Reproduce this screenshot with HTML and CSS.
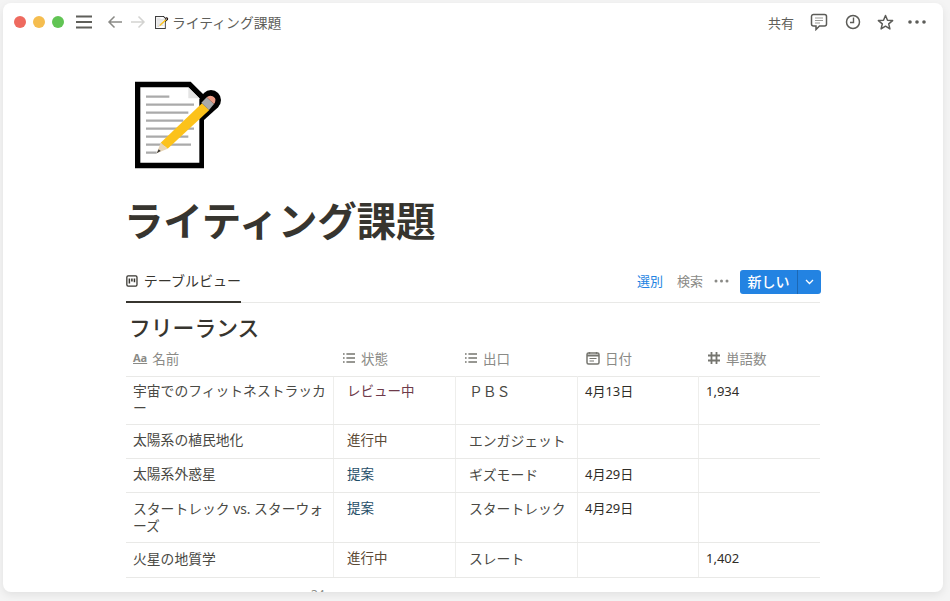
FILE: index.html
```html
<!DOCTYPE html>
<html lang="ja">
<head>
<meta charset="utf-8">
<title>ライティング課題</title>
<link rel="stylesheet" href="styles.css">
</head>
<body>
<svg class="defs" width="0" height="0" aria-hidden="true">
  <symbol id="memo" viewBox="0 0 360 330">
    <path d="M45 35H212L252 75V295H45Z" fill="#000"/>
    <circle cx="273" cy="90" r="30" fill="#000"/>
    <path d="M235 70L296 110L252 150L215 110Z" fill="#000"/>
    <path d="M61 52H205L238 85V278H61Z" fill="#fff"/>
    <path d="M205 52L238 85H205Z" fill="#e4e4e4"/>
    <path d="M78 80H148M78 104H222M78 128H205M78 152H190M78 176H222M78 200H205M78 224H213M78 248H110" stroke="#aaa" stroke-width="7" fill="none"/>
    <path d="M246 100L268 120L143 236L122 218Z" fill="#fcc21b"/>
    <path d="M122 218L143 236L110 250Z" fill="#e8d5b5"/>
    <path d="M116 238L122 243L110 250Z" fill="#333"/>
    <path d="M244 98L260 82L282 102L267 120Z" fill="#a9a9a9"/>
    <path d="M260 82Q268 74 278 79T286 92Q286 98 282 102Z" fill="#ec9b84"/>
  </symbol>
  <symbol id="list" viewBox="0 0 14 14">
    <path d="M1 3H2.6M1 7H2.6M1 11H2.6M4.4 3H13M4.4 7H13M4.4 11H13" stroke="currentColor" stroke-width="1.5" fill="none"/>
  </symbol>
</svg>
<div class="window">
  <header class="topbar">
    <div class="bar-left">
      <span class="light red"></span><span class="light amber"></span><span class="light green"></span>
      <svg class="menu" width="16" height="14" viewBox="0 0 16 14"><path d="M0 1.500H16M0 7H16M0 12.500H16" stroke="#5f5f5a" stroke-width="1.800"/></svg>
      <svg class="arrow" width="16" height="14" viewBox="0 0 16 14"><path d="M15 7H2M7.500 1.500L2 7L7.500 12.500" stroke="#8a8a86" stroke-width="1.500" fill="none"/></svg>
      <svg class="arrow" width="16" height="14" viewBox="0 0 16 14"><path d="M1 7H14M8.500 1.500L14 7L8.500 12.500" stroke="#d3d3d1" stroke-width="1.500" fill="none"/></svg>
      <svg class="crumb-icon" width="18" height="17"><use href="#memo"/></svg>
      <span class="crumb">ライティング課題</span>
    </div>
    <div class="bar-right">
      <span class="share">共有</span>
      <svg class="comment" width="18" height="18" viewBox="0 0 18 18"><path d="M3.500 1.500H14.500A2 2 0 0 1 16.500 3.500V11A2 2 0 0 1 14.500 13H9.500L6 16.500V13H3.500A2 2 0 0 1 1.500 11V3.500A2 2 0 0 1 3.500 1.500Z" fill="none" stroke="#5c5c58" stroke-width="1.500"/><path d="M5 5H13M5 7.500H13M5 10H10" stroke="#9a9a96" stroke-width="1"/></svg>
      <svg width="16" height="16" viewBox="0 0 16 16"><circle cx="8" cy="8" r="6.500" fill="none" stroke="#5c5c58" stroke-width="1.500"/><path d="M8.500 3.500V8.500H5" fill="none" stroke="#5c5c58" stroke-width="1.400"/></svg>
      <svg class="star" width="17" height="17" viewBox="0 0 17 17"><path d="M8.500 1.500L10.500 6.200L15.600 6.600L11.700 9.900L12.900 14.900L8.500 12.200L4.100 14.900L5.300 9.900L1.400 6.600L6.500 6.200Z" fill="none" stroke="#5c5c58" stroke-width="1.500" stroke-linejoin="round"/></svg>
      <svg width="18" height="4" viewBox="0 0 18 4"><circle cx="2" cy="2" r="1.800" fill="#5c5c58"/><circle cx="9" cy="2" r="1.800" fill="#5c5c58"/><circle cx="16" cy="2" r="1.800" fill="#5c5c58"/></svg>
    </div>
  </header>
  <main class="page">
    <svg class="page-icon" width="120" height="110"><use href="#memo"/></svg>
    <h1 class="title">ライティング課題</h1>
    <div class="tabs">
      <div class="tab">
        <svg width="14" height="14" viewBox="0 0 14 14"><rect x="1" y="1" width="12" height="12" rx="1.500" fill="none" stroke="#37352f" stroke-width="1.500"/><path d="M4 4V10M7 4V7.500M10 4V8.500" stroke="#37352f" stroke-width="1.800"/></svg>
        <span>テーブルビュー</span>
      </div>
      <div class="actions">
        <span class="sort">選別</span>
        <span class="search">検索</span>
        <svg width="15" height="4" viewBox="0 0 15 4"><circle cx="2" cy="2" r="1.500" fill="#8a8a86"/><circle cx="7.500" cy="2" r="1.500" fill="#8a8a86"/><circle cx="13" cy="2" r="1.500" fill="#8a8a86"/></svg>
        <div class="new">
          <span class="new-label">新しい</span>
          <span class="new-more"><svg width="9" height="6" viewBox="0 0 9 6"><path d="M1 1L4.500 4.500L8 1" fill="none" stroke="#fff" stroke-width="1.300"/></svg></span>
        </div>
      </div>
    </div>
    <h2 class="db-title">フリーランス</h2>
    <div class="table">
      <div class="row head">
        <div class="th name"><span class="aa">Aa</span>名前</div>
        <div class="th"><svg width="14" height="14"><use href="#list"/></svg>状態</div>
        <div class="th"><svg width="14" height="14"><use href="#list"/></svg>出口</div>
        <div class="th"><svg width="14" height="14" viewBox="0 0 14 14"><rect x="1" y="2" width="12" height="11" rx="1.500" fill="none" stroke="currentColor" stroke-width="1.500"/><path d="M1 4.500H13" stroke="currentColor" stroke-width="2"/><path d="M3.500 1V3M10.500 1V3" stroke="currentColor" stroke-width="1.300"/><path d="M3.500 7.500H10.500M3.500 10H8" stroke="currentColor" stroke-width="1.200"/></svg>日付</div>
        <div class="th"><svg width="14" height="14" viewBox="0 0 14 14"><path d="M4.500 1V13M9.500 1V13M1 4.500H13M1 9.500H13" stroke="currentColor" stroke-width="1.800"/></svg>単語数</div>
      </div>
      <div class="row r48">
        <div class="td">宇宙でのフィットネストラッカー</div>
        <div class="td status review">レビュー中</div>
        <div class="td outlet">ＰＢＳ</div>
        <div class="td small">4月13日</div>
        <div class="td small">1,934</div>
      </div>
      <div class="row r34">
        <div class="td">太陽系の植民地化</div>
        <div class="td status doing">進行中</div>
        <div class="td outlet">エンガジェット</div>
        <div class="td small"></div>
        <div class="td small"></div>
      </div>
      <div class="row r34">
        <div class="td">太陽系外惑星</div>
        <div class="td status idea">提案</div>
        <div class="td outlet">ギズモード</div>
        <div class="td small">4月29日</div>
        <div class="td small"></div>
      </div>
      <div class="row r50">
        <div class="td">スタートレック vs. スターウォーズ</div>
        <div class="td status idea">提案</div>
        <div class="td outlet">スタートレック</div>
        <div class="td small">4月29日</div>
        <div class="td small"></div>
      </div>
      <div class="row r35">
        <div class="td">火星の地質学</div>
        <div class="td status doing">進行中</div>
        <div class="td outlet">スレート</div>
        <div class="td small"></div>
        <div class="td small">1,402</div>
      </div>
      <div class="count">34</div>
    </div>
  </main>
</div>
</body>
</html>
```

FILE: styles.css
```css
* { box-sizing: border-box; }
html, body { margin: 0; height: 100%; }
body {
  background: #f4f4f4;
  font-family: "Noto Sans", "Noto Sans CJK JP", sans-serif;
  color: #37352f;
  overflow: hidden;
}
.defs { display: block; height: 0; }
.window {
  margin: 3px 0 0 3px;
  width: 940px;
  height: 589px;
  background: #fff;
  border-radius: 8px;
  box-shadow: 0 3px 8px rgba(0, 0, 0, .08);
  overflow: hidden;
}
.topbar {
  height: 38px;
  display: flex;
  justify-content: space-between;
  align-items: center;
  padding: 0 17px 0 11px;
}
.bar-left, .bar-right { display: flex; align-items: center; }
.light { width: 12px; height: 12px; border-radius: 50%; margin-right: 7px; }
.red { background: #ee6a5f; }
.amber { background: #f5bd4f; }
.green { background: #61c454; }
.menu { margin-left: 5px; margin-right: 15px; }
.arrow { margin-right: 7px; }
.crumb-icon { margin-left: 0; }
.crumb { font-size: 13.8px; color: #5e5e5a; margin-left: 1px; }
.bar-right { gap: 16px; }
.comment { margin-right: 1px; }
.star { margin-right: -2px; }
.share { font-size: 13px; color: #5e5e5a; }
.page { padding: 29px 0 0 123px; width: 817px; }
.page-icon { display: block; margin: 0 0 0 -6px; }
.title {
  margin: 16px 0 0 -2px;
  font-size: 39.5px;
  line-height: 50px;
  font-weight: 700;
  color: #37352f;
  letter-spacing: -.2px;
}
.tabs {
  margin-top: 17px;
  height: 40px;
  display: flex;
  justify-content: space-between;
  border-bottom: 1px solid #e9e9e7;
}
.tab {
  width: 115px;
  display: flex;
  align-items: flex-start;
  gap: 6px;
  padding-top: 8px;
  font-size: 14px;
  line-height: 20px;
  height: 40px;
  border-bottom: 2px solid #37352f;
  white-space: nowrap;
}
.tab svg { margin-top: 3px; }
.actions { display: flex; align-items: flex-start; gap: 11px; font-size: 13px; padding-top: 7px; margin-right: -1px; }
.actions > span { line-height: 20px; margin-top: 1px; }
.actions > svg { margin-top: 9px; }
.sort { color: #2383e2; margin-right: 3px; }
.search { color: #8a8a86; }
.new {
  display: flex;
  height: 24px;
  background: #2383e2;
  border-radius: 3px;
  color: #fff;
}
.new-label { width: 57px; text-align: center; font-size: 14px; line-height: 23px; font-weight: 500; }
.new-more {
  width: 24px;
  display: flex;
  align-items: center;
  justify-content: center;
  border-left: 1px solid rgba(0, 0, 0, .2);
}
.db-title {
  margin: 11px 0 0 3px;
  font-size: 21.8px;
  line-height: 27px;
  font-weight: 500;
}
.table { width: 694px; }
.row {
  display: grid;
  grid-template-columns: 208px 122px 122px 121px 121px;
  border-bottom: 1px solid #e9e9e7;
}
.head { height: 35px; margin-top: 1px; }
.r48 { height: 48px; }
.r34 { height: 34px; }
.r50 { height: 50px; }
.r35 { height: 35px; }
.r50 .td, .r35 .td { padding-top: 7px; }
.r48 .td { padding-top: 5px; }
.th {
  display: flex;
  align-items: center;
  gap: 5px;
  padding: 0 0 0 8px;
  font-size: 13.5px;
  color: #8a8a86;
  margin-bottom: 2px;
}
.th.name { padding-left: 7px; }
.th svg { flex: none; color: #75756f; }
.aa {
  font-size: 11px;
  font-weight: 700;
  color: #8a8a86;
  text-decoration: underline;
  line-height: 14px;
}
.td {
  padding: 6px 4px 0 7px;
  font-size: 13.8px;
  line-height: 17px;
  line-break: anywhere;
  border-right: 1px solid #eeeeec;
  color: #4a4944;
}
.td:last-child { border-right: 0; }
.row .status { padding-top: 7px; padding-left: 13px; font-size: 13.5px; }
.review { color: #6e3a4a; }
.doing { color: #5c4a35; }
.idea { color: #1f4e68; }
.row .outlet { padding-top: 7px; padding-left: 13px; }
.row .small { font-size: 13px; font-weight: 400; color: #2f2d28; padding-top: 7px; }
.r48 .status, .r48 .outlet, .r48 .small { margin-top: -1px; }
.count {
  margin: 9px 0 0 185px;
  font-size: 12px;
  line-height: 16px;
  color: #8a8a86;
}
```
